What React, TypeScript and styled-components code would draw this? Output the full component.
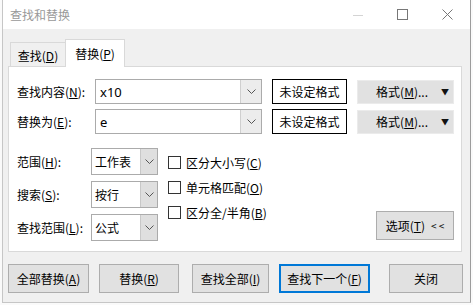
import React from "react";
import styled, { createGlobalStyle } from "styled-components";

const GlobalStyle = createGlobalStyle`
  html, body {
    margin: 0;
    padding: 0;
  }
  body {
    background: #fafafa;
    font-family: "Noto Sans CJK SC", "Noto Sans", sans-serif;
    font-size: 12px;
    color: #000;
  }
`;

const Chevron = () => (
  <svg width="9" height="5" viewBox="0 0 9 5">
    <path d="M0.5 0.5 L4.5 4.5 L8.5 0.5" fill="none" stroke="#555" strokeWidth="1" />
  </svg>
);

export default function App() {
  return (
    <>
      <GlobalStyle />
      <Window>
        <TitleBar>
          <Title>查找和替换</Title>
          <Ctrl>
            <svg width="10" height="10" viewBox="0 0 10 10">
              <path d="M0 5.5 H10" stroke="#d4d4d4" strokeWidth="1" />
            </svg>
          </Ctrl>
          <Ctrl>
            <svg width="11" height="11" viewBox="0 0 11 11">
              <rect x="0.5" y="0.5" width="10" height="10" fill="none" stroke="#777" strokeWidth="1" />
            </svg>
          </Ctrl>
          <Ctrl>
            <svg width="11" height="11" viewBox="0 0 11 11">
              <path d="M0.5 0.5 L10.5 10.5 M10.5 0.5 L0.5 10.5" stroke="#777" strokeWidth="1" />
            </svg>
          </Ctrl>
        </TitleBar>

        <Body>
          <Tabs>
            <Tab>
              查找(<u>D</u>)
            </Tab>
            <Tab $active>
              替换(<u>P</u>)
            </Tab>
          </Tabs>

          <Panel>
            <Row>
              <Label $w={78}>
                查找内容(<u>N</u>):
              </Label>
              <Combo>
                <Value>x10</Value>
                <ComboArrow>
                  <Chevron />
                </ComboArrow>
              </Combo>
              <FormatBox>未设定格式</FormatBox>
              <FormatButton>
                <span>
                  格式(<u>M</u>)...
                </span>
                <Caret>▼</Caret>
              </FormatButton>
            </Row>
            <Row>
              <Label $w={78}>
                替换为(<u>E</u>):
              </Label>
              <Combo>
                <Value>e</Value>
                <ComboArrow>
                  <Chevron />
                </ComboArrow>
              </Combo>
              <FormatBox>未设定格式</FormatBox>
              <FormatButton>
                <span>
                  格式(<u>M</u>)...
                </span>
                <Caret>▼</Caret>
              </FormatButton>
            </Row>

            <Lower>
              <SelectColumn>
                <SelectRow>
                  <Label $w={74}>
                    范围(<u>H</u>):
                  </Label>
                  <Select>
                    <SelectValue>工作表</SelectValue>
                    <SelectArrow>
                      <Chevron />
                    </SelectArrow>
                  </Select>
                </SelectRow>
                <SelectRow>
                  <Label $w={74}>
                    搜索(<u>S</u>):
                  </Label>
                  <Select>
                    <SelectValue>按行</SelectValue>
                    <SelectArrow>
                      <Chevron />
                    </SelectArrow>
                  </Select>
                </SelectRow>
                <SelectRow>
                  <Label $w={74}>
                    查找范围(<u>L</u>):
                  </Label>
                  <Select>
                    <SelectValue>公式</SelectValue>
                    <SelectArrow>
                      <Chevron />
                    </SelectArrow>
                  </Select>
                </SelectRow>
              </SelectColumn>

              <CheckColumn>
                <CheckRow>
                  <Box />
                  区分大小写(<u>C</u>)
                </CheckRow>
                <CheckRow>
                  <Box />
                  单元格匹配(<u>O</u>)
                </CheckRow>
                <CheckRow>
                  <Box />
                  区分全/半角(<u>B</u>)
                </CheckRow>
              </CheckColumn>

              <OptionsButton>
                选项(<u>T</u>)<Arrows>&lt; &lt;</Arrows>
              </OptionsButton>
            </Lower>
          </Panel>

          <Footer>
            <Button $w={81}>
              全部替换(<u>A</u>)
            </Button>
            <Button $w={80} $ml={10}>
              替换(<u>R</u>)
            </Button>
            <Button $w={77} $ml={13}>
              查找全部(<u>I</u>)
            </Button>
            <Button $w={91} $ml={10} $primary>
              查找下一个(<u>F</u>)
            </Button>
            <Button $w={74} $ml={19}>
              关闭
            </Button>
          </Footer>
        </Body>
      </Window>
    </>
  );
}

const Window = styled.div`
  box-sizing: border-box;
  width: 469px;
  height: 303px;
  margin-left: 2px;
  background: #f0f0f0;
  border-left: 1px solid #c6c6c6;
  border-right: 1px solid #9c9c9c;
  border-bottom: 1px solid #c6c6c6;
  display: flex;
  flex-direction: column;
`;

const TitleBar = styled.div`
  height: 29px;
  background: #fff;
  display: flex;
  align-items: center;
  padding-left: 7px;
`;

const Title = styled.div`
  flex: 1;
  color: #999;
  font-size: 12px;
`;

const Ctrl = styled.div`
  width: 45px;
  height: 29px;
  display: flex;
  align-items: center;
  justify-content: center;
`;

const Body = styled.div`
  padding: 10px 0 0 5px;
`;

const Tabs = styled.div`
  display: flex;
  align-items: flex-end;
  height: 28px;
  margin-bottom: -1px;
  padding-left: 2px;
  position: relative;
  z-index: 1;
`;

const Tab = styled.div<{ $active?: boolean }>`
  box-sizing: border-box;
  display: flex;
  align-items: center;
  justify-content: center;
  width: ${({ $active }) => ($active ? 60 : 55)}px;
  height: ${({ $active }) => ($active ? 28 : 24)}px;
  margin-bottom: ${({ $active }) => ($active ? 0 : 1)}px;
  padding-top: ${({ $active }) => ($active ? 0 : 1)}px;
  background: ${({ $active }) => ($active ? "#fff" : "#f0f0f0")};
  border: 1px solid #d9d9d9;
  border-bottom: none;
  border-right: ${({ $active }) => ($active ? "1px solid #d9d9d9" : "none")};
`;

const Panel = styled.div`
  box-sizing: border-box;
  width: 454px;
  height: 186px;
  background: #fff;
  border: 1px solid #d9d9d9;
  padding: 12px 7px 0 8px;
`;

const Row = styled.div`
  display: flex;
  align-items: center;
  height: 25px;

  & + & {
    margin-top: 5px;
  }
`;

const Label = styled.div<{ $w: number }>`
  width: ${({ $w }) => $w}px;
  flex-shrink: 0;
  white-space: nowrap;
`;

const Combo = styled.div`
  box-sizing: border-box;
  width: 167px;
  height: 25px;
  border: 1px solid #ababab;
  display: flex;
`;

const Value = styled.div`
  flex: 1;
  display: flex;
  align-items: center;
  padding-left: 4px;
  font-family: "Noto Sans", sans-serif;
  font-size: 13px;
`;

const ComboArrow = styled.div`
  box-sizing: border-box;
  width: 21px;
  background: #ececec;
  border-left: 1px solid #cfcfcf;
  display: flex;
  align-items: center;
  justify-content: center;
`;

const FormatBox = styled.div`
  box-sizing: border-box;
  width: 75px;
  height: 25px;
  margin-left: 10px;
  border: 1px solid #000;
  display: flex;
  align-items: center;
  justify-content: center;
`;

const FormatButton = styled.div`
  box-sizing: border-box;
  width: 97px;
  height: 24px;
  margin-left: 10px;
  background: #e1e1e1;
  border: 1px solid #ebebeb;
  display: flex;
  align-items: center;
  justify-content: flex-end;
  padding-right: 4px;
  gap: 13px;
`;

const Caret = styled.span`
  font-size: 8px;
  color: #111;
`;

const Lower = styled.div`
  display: flex;
  margin-top: 14px;
`;

const SelectColumn = styled.div`
  display: flex;
  flex-direction: column;
  gap: 6px;
`;

const SelectRow = styled.div`
  display: flex;
  align-items: center;
  height: 27px;
`;

const Select = styled.div`
  box-sizing: border-box;
  width: 67px;
  height: 27px;
  border: 1px solid #ababab;
  display: flex;
`;

const SelectValue = styled.div`
  flex: 1;
  display: flex;
  align-items: center;
  padding-left: 3px;
`;

const SelectArrow = styled.div`
  box-sizing: border-box;
  width: 17px;
  background: #dfdfdf;
  border-left: 1px solid #c8c8c8;
  display: flex;
  align-items: center;
  justify-content: center;
`;

const CheckColumn = styled.div`
  display: flex;
  flex-direction: column;
  margin-left: 10px;
  padding-top: 5px;
  gap: 7px;
`;

const CheckRow = styled.div`
  display: flex;
  align-items: center;
  height: 18px;
  white-space: nowrap;
`;

const Box = styled.span`
  box-sizing: border-box;
  width: 13px;
  height: 13px;
  border: 1px solid #333;
  background: #fff;
  margin-right: 5px;
`;

const OptionsButton = styled.div`
  box-sizing: border-box;
  width: 78px;
  height: 29px;
  margin-left: auto;
  align-self: flex-end;
  margin-bottom: 1px;
  background: #e1e1e1;
  border: 1px solid #adadad;
  display: flex;
  align-items: center;
  justify-content: center;
`;

const Arrows = styled.span`
  margin-left: 6px;
  font-size: 10px;
`;

const Footer = styled.div`
  display: flex;
  margin-top: 12px;
`;

const Button = styled.div<{ $w: number; $ml?: number; $primary?: boolean }>`
  box-sizing: border-box;
  width: ${({ $w }) => $w}px;
  height: 29px;
  margin-left: ${({ $ml }) => $ml || 0}px;
  background: #e1e1e1;
  border: ${({ $primary }) => ($primary ? "2px solid #0078d7" : "1px solid #adadad")};
  display: flex;
  align-items: center;
  justify-content: center;
  white-space: nowrap;
`;
